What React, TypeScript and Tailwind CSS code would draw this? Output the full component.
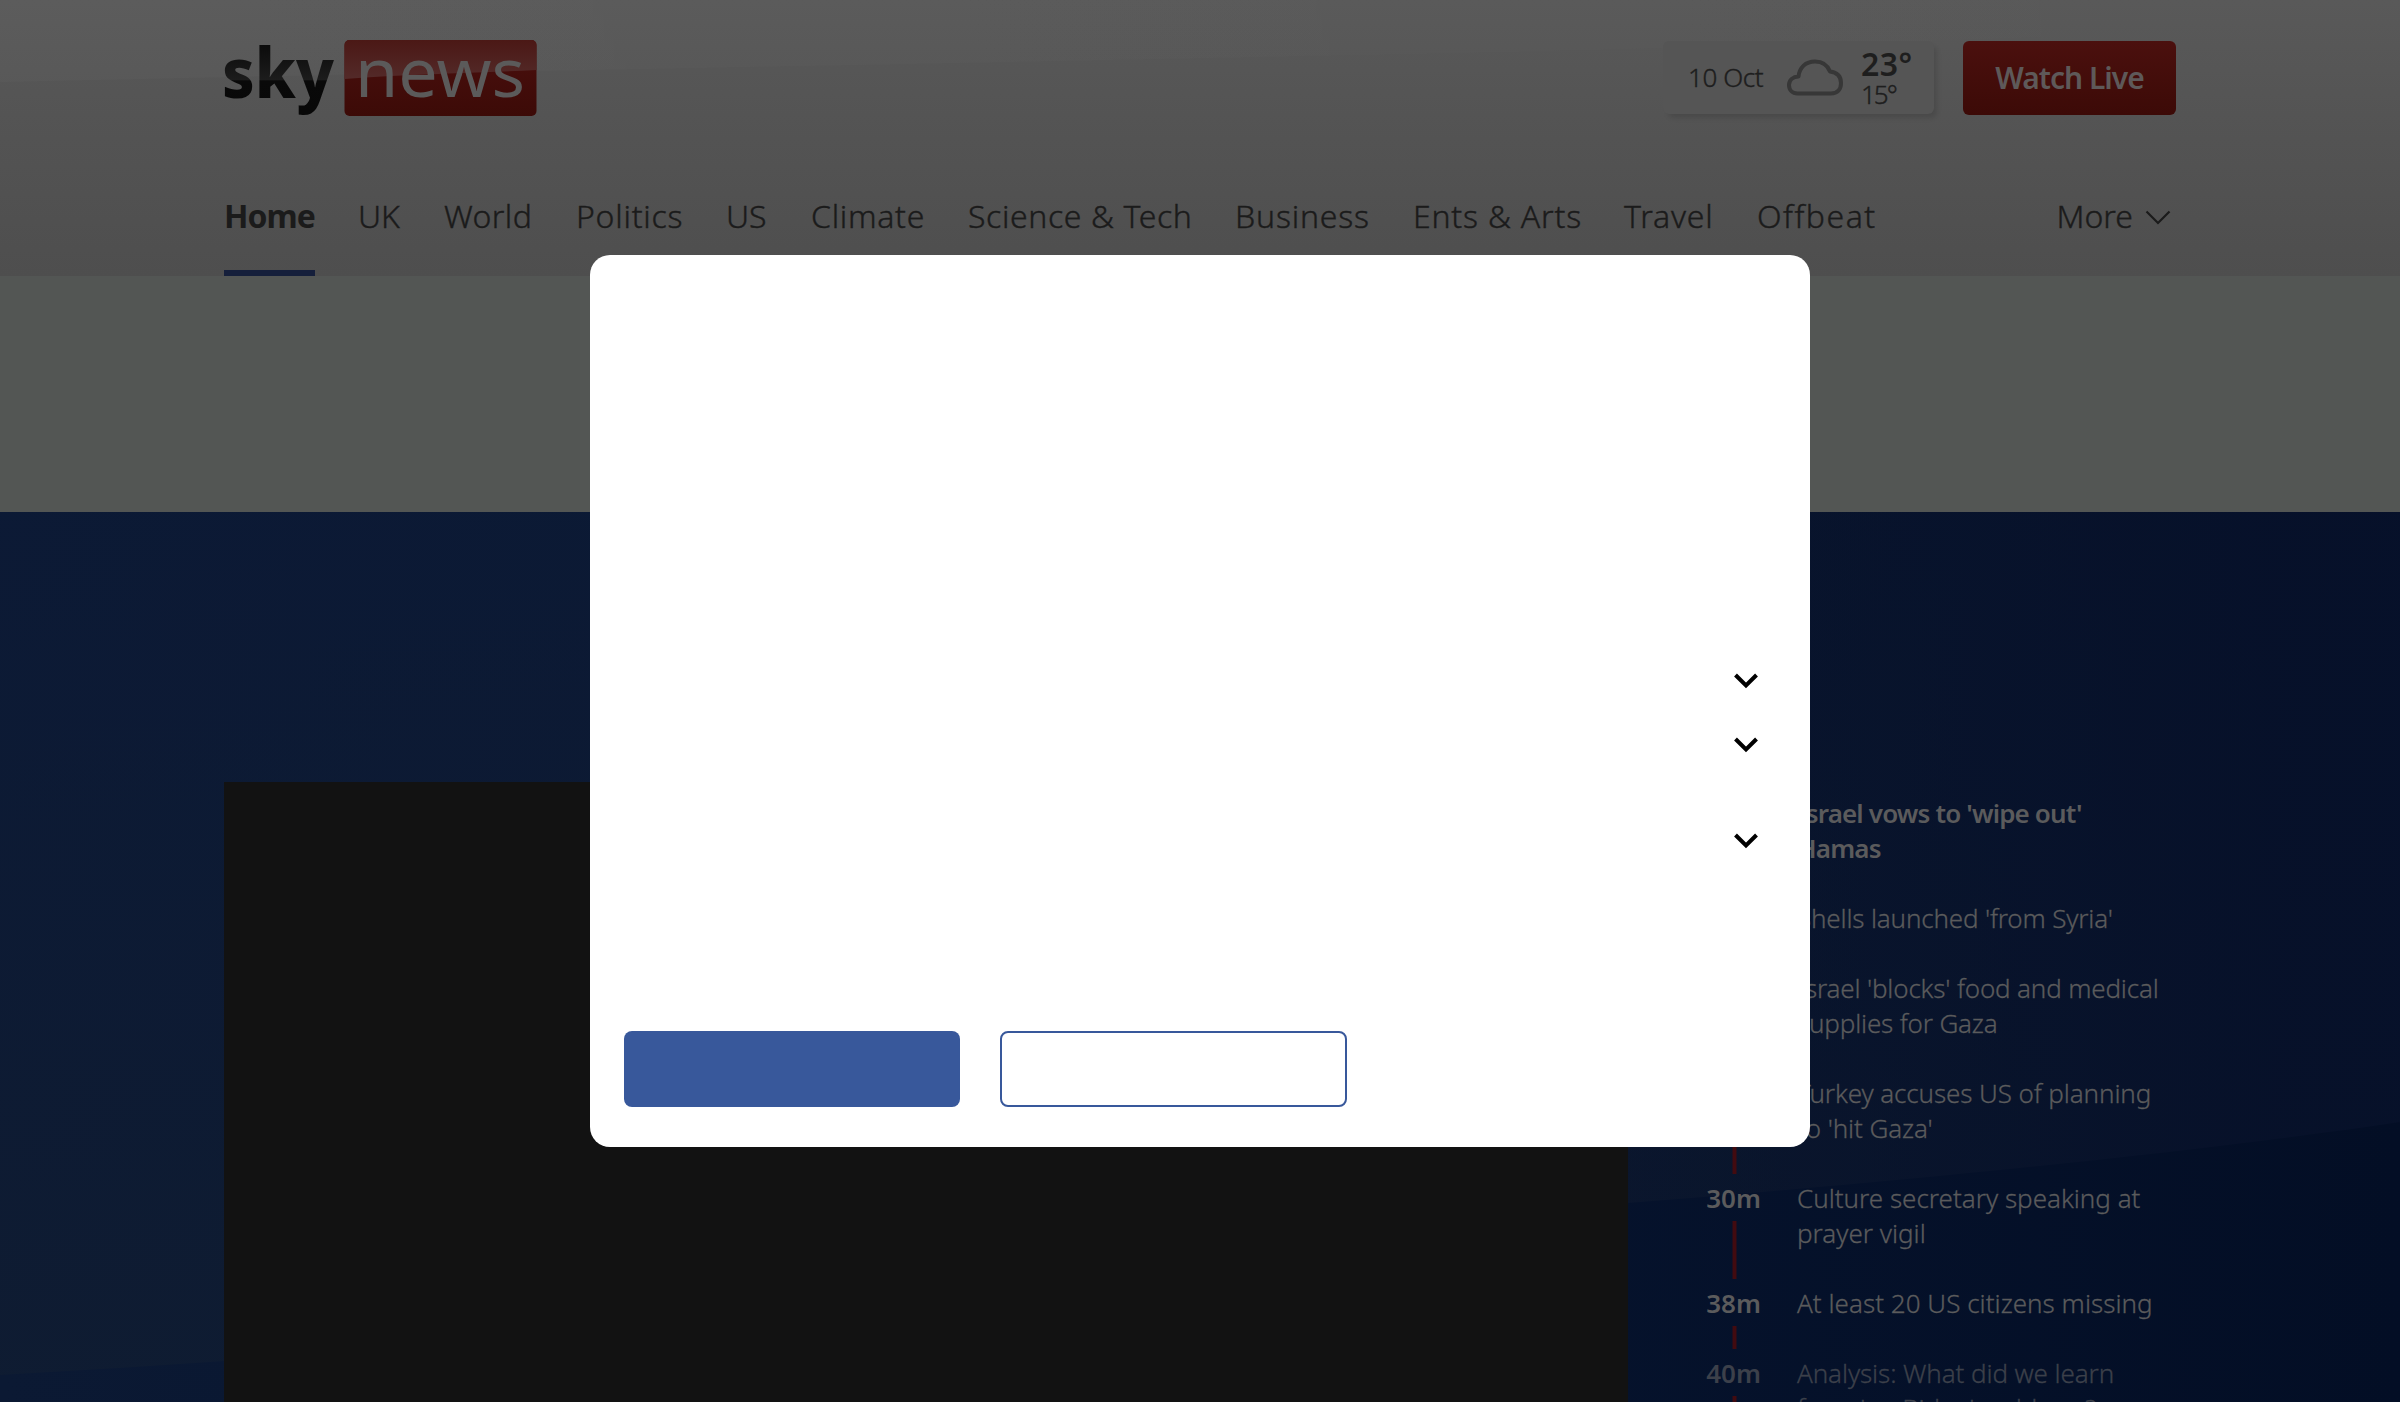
import type { ReactNode } from "react";

type NavItem = { label: string; cls: string };

const NAV: NavItem[] = [
  { label: "Home", cls: "w-[91px] font-bold tracking-[-1px]" },
  { label: "UK", cls: "w-[43px] tracking-[0px]" },
  { label: "World", cls: "w-[89px] tracking-[0.4px]" },
  { label: "Politics", cls: "w-[107px] tracking-[0.75px]" },
  { label: "US", cls: "w-[42px] tracking-[0px]" },
  { label: "Climate", cls: "w-[114px] tracking-[0.7px]" },
  { label: "Science & Tech", cls: "w-[224px] tracking-[0.6px]" },
  { label: "Business", cls: "w-[135px] tracking-[0.8px]" },
  { label: "Ents & Arts", cls: "w-[168px] tracking-[0.8px]" },
  { label: "Travel", cls: "w-[90px] tracking-[0.8px]" },
  { label: "Offbeat", cls: "w-[119px] tracking-[1.5px]" },
];

type Story = { time: string; lines: string[]; bold?: boolean; cls?: string };

const STORIES: Story[] = [
  { time: "3m", lines: ["Israel vows to 'wipe out'", "Hamas"], bold: true, cls: "tracking-[-0.85px]" },
  { time: "12m", lines: ["Shells launched 'from Syria'"], cls: "tracking-[-0.17px]" },
  { time: "18m", lines: ["Israel 'blocks' food and medical", "supplies for Gaza"], cls: "tracking-[-0.17px]" },
  { time: "24m", lines: ["Turkey accuses US of planning", "to 'hit Gaza'"], cls: "tracking-[-0.1px]" },
  { time: "30m", lines: ["Culture secretary speaking at", "prayer vigil"], cls: "tracking-[0px]" },
  { time: "38m", lines: ["At least 20 US citizens missing"], cls: "tracking-[0.03px]" },
  { time: "40m", lines: ["Analysis: What did we learn", "from Joe Biden's address?"], cls: "tracking-[-0.1px]" },
];

function Chevron() {
  return (
    <svg width="24" height="16" viewBox="0 0 24 16" fill="none">
      <path d="M1.5 2 L12 12.5 L22.5 2" stroke="#000" strokeWidth="4" />
    </svg>
  );
}

function Logo() {
  return (
    <svg width="314" height="76" viewBox="0 0 314 76" className="block overflow-visible">
      <defs>
        <linearGradient id="red" x1="0" y1="0" x2="0" y2="1">
          <stop offset="0" stopColor="#4b100e" />
          <stop offset="1" stopColor="#3c0a07" />
        </linearGradient>
        <linearGradient id="gloss" x1="0" y1="0" x2="0" y2="1">
          <stop offset="0" stopColor="#4b1815" />
          <stop offset="1" stopColor="#532a29" />
        </linearGradient>
        <linearGradient id="ink" gradientUnits="userSpaceOnUse" x1="0" y1="4" x2="0" y2="72">
          <stop offset="0" stopColor="#0b0b0b" />
          <stop offset="0.53" stopColor="#1c1c1c" />
          <stop offset="0.54" stopColor="#090909" />
          <stop offset="1" stopColor="#080808" />
        </linearGradient>
      </defs>
      <text
        x="-2"
        y="57.500"
        fontFamily="'Noto Sans', sans-serif"
        fontWeight="800"
        fontSize="69"
        textLength="112"
        lengthAdjust="spacingAndGlyphs"
        fill="url(#ink)"
      >
        sky
      </text>
      <rect x="120.5" y="0" width="192" height="76" rx="5" fill="url(#red)" />
      <path
        d="M125.500 0 H307.500 a5 5 0 0 1 5 5 V30 C250 33 185 34 120.500 39 V5 a5 5 0 0 1 5 -5 Z"
        fill="url(#gloss)"
      />
      <text
        x="131"
        y="56.500"
        fontFamily="'Noto Sans', sans-serif"
        fontWeight="400"
        fontSize="67"
        textLength="170"
        lengthAdjust="spacingAndGlyphs"
        fill="#5b5a5a"
      >
        news
      </text>
    </svg>
  );
}

function Weather() {
  return (
    <div className="flex h-[73px] w-[271px] rounded-[6px] bg-[#555555] pl-[25px] text-[#1e1e1e] shadow-[4px_5px_5px_-1px_rgba(0,0,0,0.12)]">
      <span className="w-[99px] pt-[19px] text-[26px] leading-[35px] font-light tracking-[-0.4px] [-webkit-text-stroke:0.4px]">
        10 Oct
      </span>
      <svg width="56" height="37" viewBox="0 0 56 37" fill="none" className="mt-[18px]">
        <path
          d="M10.500 34.500 C5.500 34.500 2 31 2 26 C2 21 6 17.500 11.500 17.500 C12.500 8.500 18.500 2.500 28 2.500 C35.500 2.500 40.500 6 43 12.500 C50 13.500 54 17.500 54 24 C54 30.500 50.500 34.500 44 34.500 Z"
          stroke="#373737"
          strokeWidth="4"
          strokeLinejoin="round"
        />
      </svg>
      <div className="flex flex-col pt-[6px] pl-[18px]">
        <span className="h-[34px] text-[32px] leading-[34px] font-semibold tracking-[0.4px]">23°</span>
        <span className="h-[27px] text-[26px] leading-[27px] font-light tracking-[-2px] [-webkit-text-stroke:0.4px]">15°</span>
      </div>
    </div>
  );
}

function Header() {
  return (
    <header className="relative h-[276px] bg-linear-to-b from-[#595959] via-[#535353] to-[#4e4e4e]">
      <svg width="2400" height="84" viewBox="0 0 2400 84" className="absolute top-0 left-0">
        <defs>
          <linearGradient id="sheen" x1="0" y1="0" x2="1" y2="0">
            <stop offset="0" stopColor="#fff" stopOpacity="0.02" />
            <stop offset="1" stopColor="#fff" stopOpacity="0" />
          </linearGradient>
        </defs>
        <path d="M0 0 H2400 V22 C1900 50 1000 60 0 82 Z" fill="url(#sheen)" />
      </svg>
      <div className="relative flex h-full flex-col px-[224px]">
        <div className="flex items-start pt-[40px]">
          <Logo />
          <div className="mt-[1px] ml-auto flex gap-[29px]">
            <Weather />
            <button className="h-[74px] w-[213px] rounded-[6px] bg-linear-to-b from-[#4b100e] to-[#3c0a07] pb-[2px] text-[30px] font-semibold tracking-[-1px] text-[#5e5959]">
              Watch Live
            </button>
          </div>
        </div>
        <nav className="mt-auto flex h-[84px] items-stretch gap-[43px] text-[32px] leading-[48px] font-light whitespace-nowrap text-[#1b1b1b]">
          {NAV.map((item, i) => (
            <a
              key={item.label}
              className={`${item.cls} border-b-[6px] ${i === 0 ? "border-[#151f3b]" : "border-transparent [-webkit-text-stroke:0.4px]"}`}
            >
              {item.label}
            </a>
          ))}
          <a className="ml-auto flex h-[48px] gap-[12px] pr-[5px] [-webkit-text-stroke:0.4px]">
            More
            <svg width="26" height="16" viewBox="0 0 26 16" fill="none" className="mt-[18px]">
              <path d="M1.500 1.500 L13 13 L24.500 1.500" stroke="#1b1b1b" strokeWidth="2.200" />
            </svg>
          </a>
        </nav>
      </div>
    </header>
  );
}

function Timeline() {
  return (
    <ul className="flex h-[620px] w-[548px] flex-col overflow-hidden pt-[14px] pl-[65px] text-[26px] leading-[35px] whitespace-nowrap text-[#5b5b5c]">
      {STORIES.map((s, i) => (
        <li key={s.time} className={`flex shrink-0 ${i === STORIES.length - 1 ? "text-[#3c404a]" : ""}`}>
          <div className="flex w-[81px] flex-col items-center">
            <span className="h-[35px] font-semibold">{s.time}</span>
            <i className="mt-[5px] mb-[7px] w-[4px] flex-1 translate-x-[0.5px] bg-[#420b10]" />
          </div>
          <p className={`pb-[35px] pl-[23px] ${s.bold ? "font-semibold" : "font-light [-webkit-text-stroke:0.3px]"} ${s.cls ?? ""}`}>
            {s.lines.map((l) => (
              <span key={l} className="block">
                {l}
              </span>
            ))}
          </p>
        </li>
      ))}
    </ul>
  );
}

function Hero() {
  return (
    <section className="relative h-[890px] overflow-hidden bg-linear-to-r from-[#0e1b35] via-[#0a1831] to-[#040f27]">
      <svg width="2400" height="890" viewBox="0 0 2400 890" className="absolute top-0 left-0">
        <defs>
          <linearGradient id="wash" x1="0" y1="0" x2="0.250" y2="1">
            <stop offset="0" stopColor="#0b1935" stopOpacity="0.700" />
            <stop offset="1" stopColor="#0f1c31" stopOpacity="0.900" />
          </linearGradient>
          <linearGradient id="edge" x1="0" y1="0" x2="1" y2="0">
            <stop offset="0" stopColor="#0b1933" />
            <stop offset="0.600" stopColor="#06132d" />
            <stop offset="1" stopColor="#030e25" />
          </linearGradient>
          <linearGradient id="shade" x1="0" y1="0" x2="1" y2="0">
            <stop offset="0.400" stopColor="#071127" stopOpacity="0" />
            <stop offset="0.950" stopColor="#061029" stopOpacity="0.900" />
          </linearGradient>
        </defs>
        <path d="M0 0 H2400 V890 H0 Z" fill="url(#wash)" />
        <path d="M0 0 H2400 V890 H0 Z" fill="url(#shade)" />
        <path d="M0 863 C600 830 1300 760 1628 691 C1900 670 2200 640 2400 610 V890 H0 Z" fill="url(#edge)" />
      </svg>
      <div className="relative flex pt-[270px] pl-[224px]">
        <div className="h-[620px] w-[1404px] bg-[#121212]" />
        <Timeline />
      </div>
    </section>
  );
}

function Row({ children, className }: { children: ReactNode; className: string }) {
  return <div className={`flex justify-end ${className}`}>{children}</div>;
}

function ConsentDialog() {
  return (
    <div
      role="dialog"
      className="absolute top-[255px] left-[590px] flex h-[892px] w-[1220px] flex-col rounded-[20px] bg-white px-[34px]"
    >
      <div className="flex flex-col pt-[418px] pr-[18px]">
        <Row className="h-[64px]"><Chevron /></Row>
        <Row className="h-[96px]"><Chevron /></Row>
        <Row className="h-[16px]"><Chevron /></Row>
      </div>
      <div className="mt-auto mb-[40px] flex gap-[40px]">
        <button className="h-[76px] w-[336px] rounded-[8px] bg-[#38589b]" />
        <button className="h-[76px] w-[347px] rounded-[8px] border-2 border-[#38589b] bg-white" />
      </div>
    </div>
  );
}

export default function App() {
  return (
    <div className="relative h-[1402px] w-[2400px] overflow-hidden font-['Noto_Sans',sans-serif]">
      <Header />
      <div className="h-[236px] bg-[#535654]" />
      <Hero />
      <ConsentDialog />
    </div>
  );
}
